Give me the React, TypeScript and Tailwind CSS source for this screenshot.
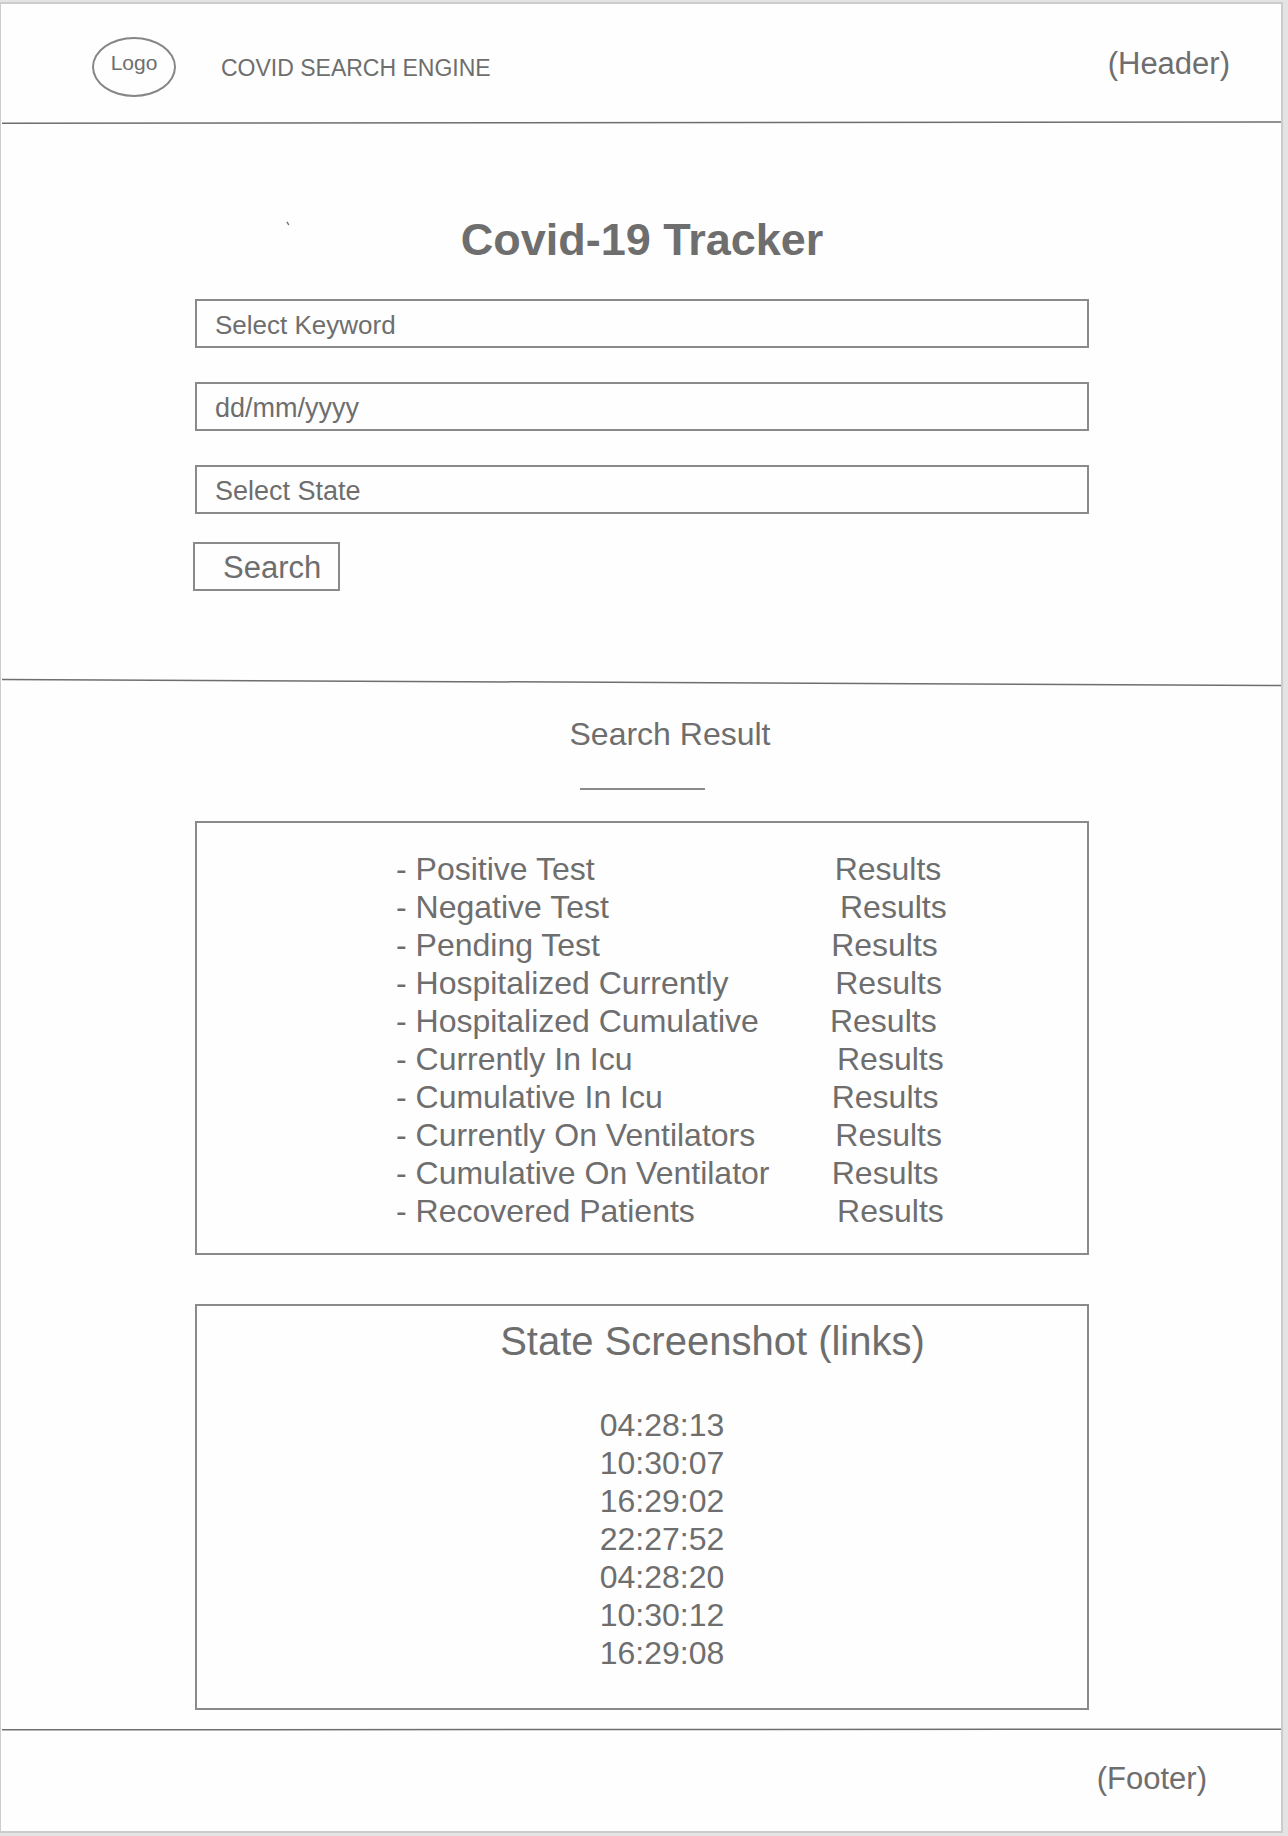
import React from "react";

const results: { label: string; gap: number }[] = [
  { label: "Positive Test", gap: 27 },
  { label: "Negative Test", gap: 26 },
  { label: "Pending Test", gap: 26 },
  { label: "Hospitalized Currently", gap: 12 },
  { label: "Hospitalized Cumulative", gap: 8 },
  { label: "Currently In Icu", gap: 23 },
  { label: "Cumulative In Icu", gap: 19 },
  { label: "Currently On Ventilators", gap: 9 },
  { label: "Cumulative On Ventilator", gap: 7 },
  { label: "Recovered Patients", gap: 16 },
];

const screenshots = [
  "04:28:13",
  "10:30:07",
  "16:29:02",
  "22:27:52",
  "04:28:20",
  "10:30:12",
  "16:29:08",
];

const fieldClass =
  "block h-[49px] w-full appearance-none rounded-none border-2 border-[#8a8a8a] bg-transparent pt-1 pl-[18px] text-[#6e6e6e] outline-none placeholder:text-[#6e6e6e] placeholder:opacity-100";

/* Hand-drawn divider running across the frame, from height y1 to height y2. */
function Rule({ height, y1, y2 }: { height: number; y1: number; y2: number }) {
  return (
    <svg
      className="block w-full pl-px"
      height={height}
      viewBox={`0 0 1280 ${height}`}
      preserveAspectRatio="none"
      aria-hidden="true"
    >
      <line x1="0" y1={y1} x2="1280" y2={y2} stroke="#6e6e6e" strokeWidth="1.5" />
    </svg>
  );
}

function Header() {
  return (
    <header className="flex items-start justify-between pt-[33px] pr-[51px] pb-6 pl-[91px]">
      <div className="flex items-center gap-[45px]">
        <div className="flex h-[60px] w-[84px] items-center justify-center rounded-[50%] border-2 border-[#868686] pb-2 text-[21px]">
          Logo
        </div>
        <span className="pt-0.5 text-[23px]">COVID SEARCH ENGINE</span>
      </div>
      <span className="pt-[7px] text-[31px] leading-[40px]">(Header)</span>
    </header>
  );
}

function SearchForm() {
  return (
    <section className="relative pt-[88px] pb-[87px] pl-0.5">
      <svg
        className="absolute top-24 left-[285px] h-[5px] w-[4px]"
        viewBox="0 0 4 5"
        aria-hidden="true"
      >
        <path d="M1 0.8 L2.8 4" stroke="#6e6e6e" strokeWidth="1.4" fill="none" />
      </svg>
      <h1 className="text-center text-[45px] leading-[54px] font-bold">Covid-19 Tracker</h1>
      <form
        className="mx-auto mt-8 flex w-full max-w-[894px] flex-col"
        onSubmit={(e) => e.preventDefault()}
      >
        <div className="flex flex-col gap-[34px]">
          <select aria-label="Keyword" className={`${fieldClass} text-[26px]`} defaultValue="">
            <option value="">Select Keyword</option>
          </select>
          <input
            aria-label="Date"
            type="text"
            placeholder="dd/mm/yyyy"
            className={`${fieldClass} text-[27px]`}
          />
          <select aria-label="State" className={`${fieldClass} text-[27px]`} defaultValue="">
            <option value="">Select State</option>
          </select>
        </div>
        <button
          type="submit"
          className="mt-7 -ml-0.5 h-[49px] self-start border-2 border-[#8a8a8a] pt-0.5 pr-[17px] pl-7 text-[31px] leading-[40px]"
        >
          Search
        </button>
      </form>
    </section>
  );
}

function SearchResult() {
  return (
    <section className="pt-[27px] pl-0.5">
      <h2 className="pl-14 text-center text-[32px] leading-[40px]">Search Result</h2>
      <hr className="mx-auto mt-[34px] w-[125px] border-t-2 border-[#8a8a8a]" />
      <div className="mx-auto mt-[31px] w-full max-w-[894px] border-2 border-[#8a8a8a] pt-[27px] pb-[23px] pl-[199px]">
        <ul className="text-[32px] leading-[38px]">
          {results.map(({ label, gap }) => (
            <li key={label} className="whitespace-pre">
              {`- ${label}${" ".repeat(gap)}Results`}
            </li>
          ))}
        </ul>
      </div>
    </section>
  );
}

function StateScreenshots() {
  return (
    <section className="pt-[49px] pb-[18px] pl-0.5">
      <div className="mx-auto w-full max-w-[894px] border-2 border-[#8a8a8a] pt-[11px] pb-9 text-center">
        <h2 className="pl-[141px] text-[40px] leading-[48px]">State Screenshot (links)</h2>
        <ul className="mt-[41px] pl-10 text-[32px] leading-[38px]">
          {screenshots.map((time) => (
            <li key={time}>
              <a href="#">{time}</a>
            </li>
          ))}
        </ul>
      </div>
    </section>
  );
}

export default function App() {
  return (
    <div className="min-h-screen bg-[#e4e4e4] pt-0.5 pr-[5px] pb-[3px] font-['Liberation_Sans',Arial,sans-serif] text-[#6e6e6e]">
      <div className="border-2 border-l border-[#cccccc] bg-[#fefefe]">
        <Header />
        <Rule height={4} y1={2.2} y2={1} />
        <main>
          <SearchForm />
          <Rule height={9} y1={1.5} y2={7.5} />
          <SearchResult />
          <StateScreenshots />
        </main>
        <Rule height={3} y1={1.8} y2={1.2} />
        <footer className="pt-7 pr-[74px] pb-8 text-right text-[31px] leading-[40px]">
          (Footer)
        </footer>
      </div>
    </div>
  );
}
